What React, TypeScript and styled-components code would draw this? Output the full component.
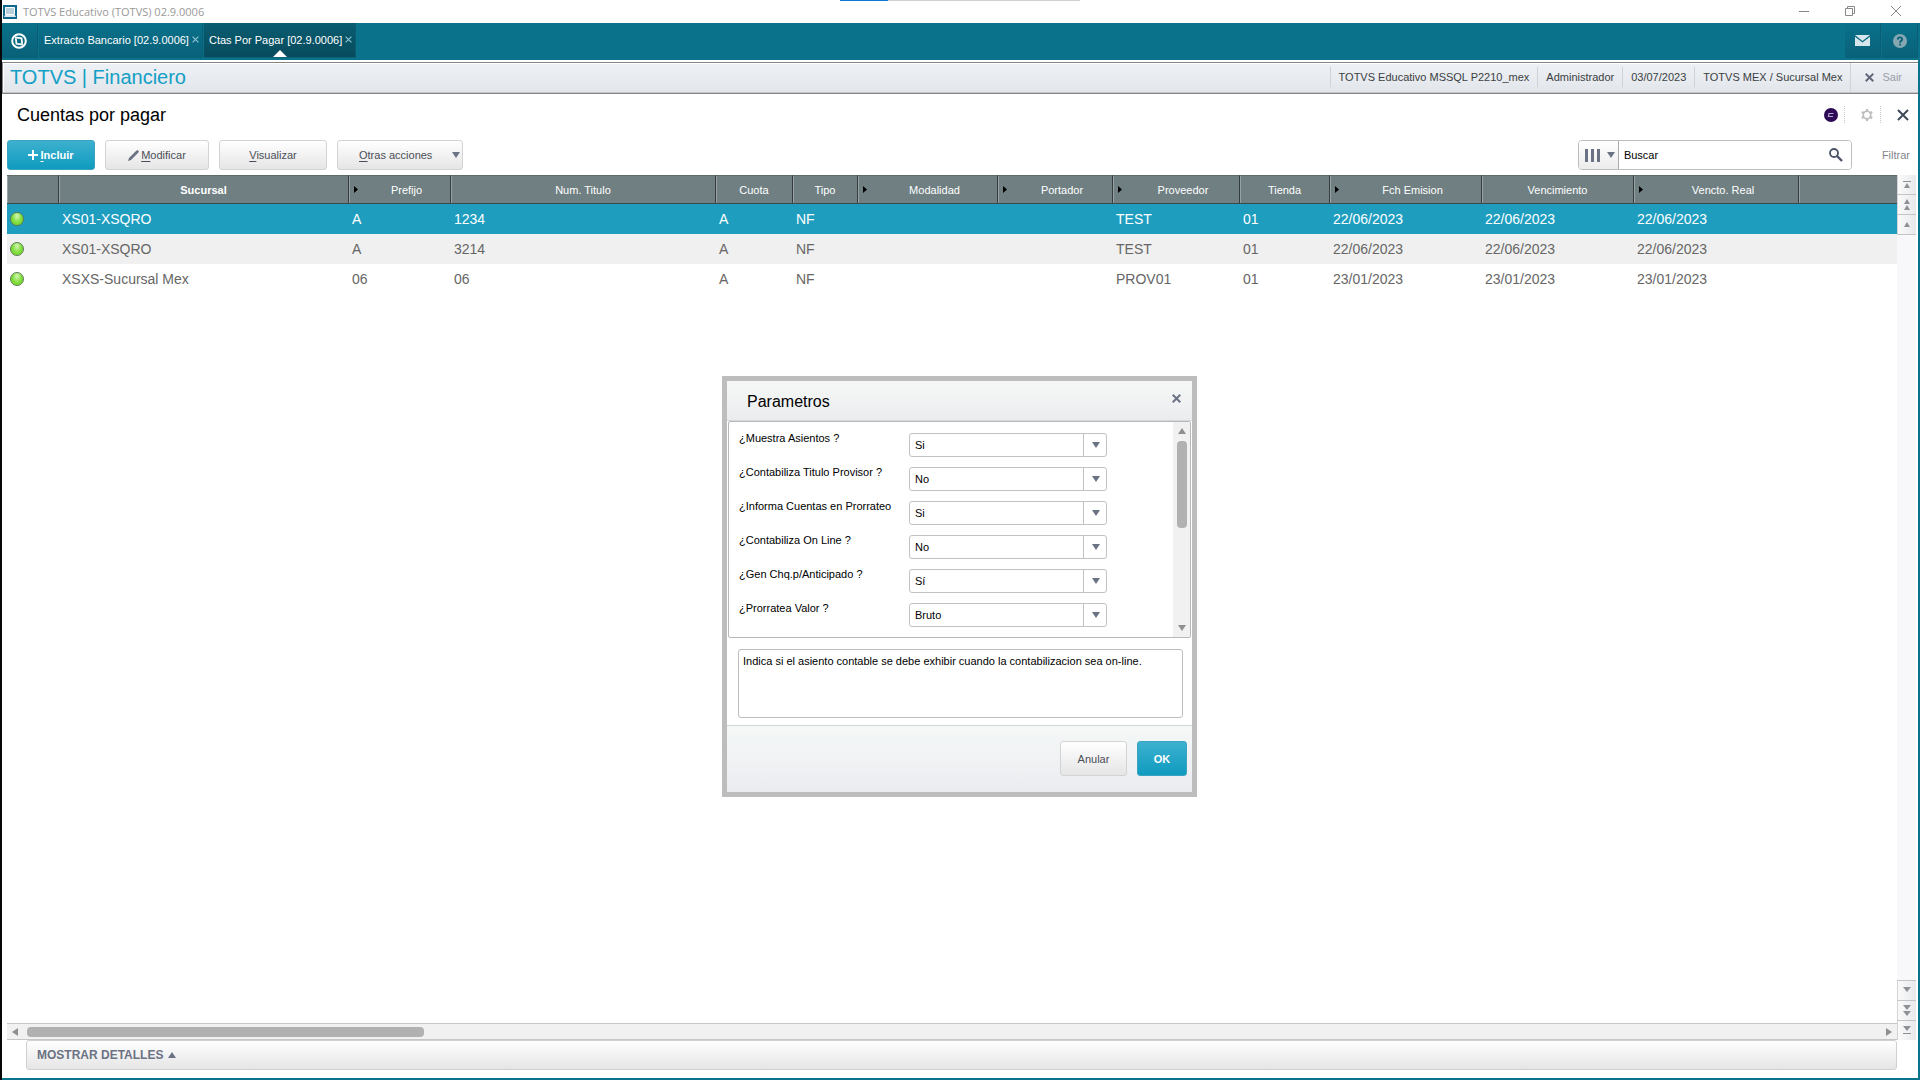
import React from "react";
import styled, { createGlobalStyle, css } from "styled-components";

const GlobalStyle = createGlobalStyle`
  *, *::before, *::after { box-sizing: border-box; }
  html, body, #root { height: 100%; }
  body {
    margin: 0;
    overflow: hidden;
    background: #fff;
    color: #000;
    font-family: "Liberation Sans", Arial, sans-serif;
    font-size: 11px;
    line-height: 14px;
  }
  button, input, select, textarea { font: inherit; margin: 0; }
  button { cursor: pointer; }
  svg { display: block; flex: none; }
`;

const teal = "#0b728c";
const slate = "#6b7283";

const Window = styled.div`
  height: 100vh;
  display: flex;
  flex-direction: column;
  border-left: 2px solid #050708;
`;

const TitleBar = styled.header`
  height: 23px;
  flex: none;
  display: flex;
  align-items: center;
  padding-left: 1px;
  background: #fff;
  color: #999;
  font-family: "Open Sans", "Noto Sans", sans-serif;
  position: relative;
`;

const WindowTitle = styled.span`
  flex: 1;
  padding-left: 6px;
`;

const LoadTrack = styled.div`
  position: absolute;
  top: 0;
  left: 838px;
  width: 240px;
  height: 1px;
  background: #d0d0d0;
`;

const LoadBar = styled.div`
  width: 48px;
  height: 1px;
  background: #0a78d6;
`;

const WindowButton = styled.button`
  width: 46px;
  height: 23px;
  padding: 0 2px 2px 0;
  border: 0;
  background: none;
  color: #888;
  display: grid;
  place-items: center;
`;

const Frame = styled.div`
  flex: 1;
  min-height: 0;
  display: flex;
  flex-direction: column;
  border-right: 2px solid ${teal};
  border-bottom: 2px solid ${teal};
  background: #fff;
`;

const TabBar = styled.nav`
  height: 37px;
  flex: none;
  display: flex;
  align-items: flex-start;
  gap: 1px;
  background: ${teal};
`;

const Tab = styled.div<{ $active?: boolean }>`
  height: 35px;
  display: flex;
  align-items: center;
  gap: 2px;
  padding: 0 2px 0 5px;
  border-right: 1px solid #0a5d73;
  border-bottom: 1px solid #0a6379;
  background: linear-gradient(${(p) => (p.$active ? "#095c71, #074b5d" : "#0a718a, #086179")});
  position: relative;
`;

const TabNotch = styled.svg`
  position: absolute;
  left: calc(50% - 7px);
  bottom: 0;
`;

const TabName = styled.button`
  height: 34px;
  padding: 0;
  border: 0;
  background: none;
  color: #fff;
  white-space: nowrap;
`;

const TabClose = styled.button`
  padding: 0 0 2px;
  width: 9px;
  height: 14px;
  border: 0;
  background: none;
  color: #8fc3d2;
  display: grid;
  place-items: center;
`;

const BarButton = styled.button`
  width: 36px;
  height: 35px;
  padding: 0 2px 0 0;
  border: 0;
  border-right: 1px solid #0a5d73;
  background: linear-gradient(#0a718a, #086179);
  color: #fff;
  display: grid;
  place-items: center;
`;

const ToolButton = styled(BarButton)`
  padding: 0;
`;

const Spacer = styled.div`
  flex: 1;
`;

const ProductBar = styled.div`
  height: 32px;
  flex: none;
  display: flex;
  align-items: center;
  margin-top: 2px;
  padding: 0 0 2px 7px;
  border: 1px solid #858585;
  border-right: 0;
  box-shadow: inset 0 -2px 0 -1px #c4c4c8, inset 1px 1px 0 #fff;
  background: linear-gradient(#eef1f5, #e2e5ea);
`;

const Product = styled.h1`
  flex: 1;
  margin: 0;
  color: #12a0c6;
  font-size: 20px;
  line-height: 24px;
  font-weight: 400;
`;

const Info = styled.span`
  height: 20px;
  display: flex;
  align-items: center;
  padding: 0 8px;
  border-left: 1px solid #d0d3d3;
  color: #3a3f42;
`;

const Exit = styled.button`
  height: 28px;
  display: flex;
  align-items: center;
  gap: 8px;
  padding: 0 16px 0 14px;
  border: 0;
  border-left: 1px solid #d0d3d3;
  background: none;
  color: #9a9da8;
`;

const Workspace = styled.main`
  flex: 1;
  min-height: 0;
  display: flex;
  flex-direction: column;
  padding: 0 2px 8px 5px;
  position: relative;
`;

const Heading = styled.div`
  height: 41px;
  flex: none;
  display: flex;
  align-items: center;
  padding: 0 7px 0 10px;
`;

const PageTitle = styled.h2`
  flex: 1;
  margin: 0;
  font-size: 18px;
  line-height: 22px;
  font-weight: 400;
`;

const HeadButton = styled.button`
  width: 36px;
  height: 17px;
  padding: 0 0 0 9px;
  border: 0;
  border-right: 1px dotted #c8c8c8;
  background: none;
  display: grid;
  place-items: center;
`;

const HeadClose = styled(HeadButton)`
  justify-items: end;
  width: 28px;
  border-right: 0;
  color: #3f4a59;
`;

const Toolbar = styled.div`
  height: 40px;
  flex: none;
  display: flex;
  align-items: center;
  gap: 10px;
  padding-right: 6px;
`;

const primary = css`
  border-color: #3aa3bf;
  background: linear-gradient(#3db0cf, #0f9bbf);
  color: #fff;
  font-weight: 700;
`;

const Button = styled.button<{ $primary?: boolean; $width: number; $tall?: boolean }>`
  width: ${(p) => p.$width}px;
  height: ${(p) => (p.$tall ? 35 : 30)}px;
  display: flex;
  align-items: center;
  justify-content: center;
  gap: 2px;
  padding: 0;
  border: 1px solid #d2d3d3;
  border-radius: 3px;
  background: linear-gradient(#fff, #e5e5e5);
  color: #4b4f58;
  ${(p) => p.$primary && primary}
`;

const MenuButton = styled(Button)`
  justify-content: space-between;
  padding: 0 2px 0 21px;
`;

const Key = styled.span`
  text-decoration: underline;
  text-underline-offset: 2px;
`;

const Search = styled.form`
  width: 274px;
  height: 30px;
  margin: 0 20px 0 auto;
  display: flex;
  border: 1px solid #bdbdbd;
  border-radius: 4px;
  overflow: hidden;
`;

const ColumnPicker = styled.button`
  width: 40px;
  padding: 0 3px 0 6px;
  border: 0;
  border-right: 1px solid #aaa;
  background: linear-gradient(#fff, #ececec);
  display: flex;
  align-items: center;
  justify-content: space-between;
`;

const SearchInput = styled.input`
  flex: 1;
  min-width: 0;
  padding: 0 5px;
  border: 0;
  outline: 0;
  background: #fff;
  color: #000;
  &::placeholder { color: #000; opacity: 1; }
`;

const SearchButton = styled.button`
  width: 30px;
  padding: 0;
  border: 0;
  background: #fff;
  display: grid;
  place-items: center;
`;

const FilterButton = styled.button`
  padding: 0;
  border: 0;
  background: none;
  color: #85858c;
`;

const GridArea = styled.div`
  flex: 1;
  min-height: 0;
  display: flex;
`;

const GridMain = styled.div`
  flex: 1;
  min-width: 0;
  display: flex;
  flex-direction: column;
`;

const TableBox = styled.div`
  flex: 1;
  overflow: hidden;
`;

const Table = styled.table`
  width: 100%;
  table-layout: fixed;
  border-collapse: separate;
  border-spacing: 0;
  font-size: 14px;
  line-height: 16px;
`;

const Th = styled.th<{ $strong?: boolean }>`
  height: 29px;
  padding: 0;
  border-top: 1px solid #626b6b;
  border-bottom: 1px solid #3f4848;
  border-right: 1px solid #353d40;
  box-shadow: inset 1px 0 0 #96a2a4;
  background: #6f7f82;
  color: #fff;
  font-size: 11px;
  line-height: 14px;
  font-weight: ${(p) => (p.$strong ? 700 : 400)};
  &:last-child { border-right: 0; }
`;

const ThContent = styled.div`
  display: flex;
  align-items: center;
  justify-content: center;
`;

const ThLabel = styled.span`
  flex: 1;
  text-align: center;
`;

const SortMark = styled.svg`
  width: 5px;
  margin: 0 4px 0 5px;
`;

const Tr = styled.tr<{ $selected?: boolean }>`
  background: ${(p) => (p.$selected ? "#1e9dbf" : "#fff")};
  color: ${(p) => (p.$selected ? "#fff" : "#666")};
  &:nth-child(2) { background: #f0f0f0; }
`;

const Td = styled.td`
  height: 30px;
  padding: 0 3px;
  white-space: nowrap;
`;

const Status = styled.span`
  width: 14px;
  height: 14px;
  display: block;
  border: 1px solid #5c7a55;
  border-radius: 50%;
  background: radial-gradient(ellipse at 50% 25%, #d2f8b4, #7fdc3a 55%, #6fdc28);
`;

const HScroll = styled.div`
  height: 17px;
  flex: none;
  display: flex;
  align-items: center;
  padding: 0 5px;
  border: solid #c6c6c6;
  border-width: 1px 0;
  background: #f1f1f1;
`;

const HTrack = styled.div`
  flex: 1;
  padding: 0 9px;
`;

const HThumb = styled.div`
  width: 397px;
  height: 10px;
  border-radius: 4px;
  background: #b1b1b1;
`;

const VNav = styled.div`
  width: 19px;
  display: flex;
  flex-direction: column;
  background: #f8f8fb;
`;

const VButton = styled.button`
  width: 19px;
  height: 20px;
  padding: 0;
  border: 0;
  border-left: 1px solid #d4d4d6;
  border-bottom: 1px solid #c4c4c8;
  background: linear-gradient(90deg, #fafafa, #e8e9ec);
  display: grid;
  place-items: center;
`;

const VButtonDown = styled(VButton)`
  border-top: 1px solid #c4c4c8;
  border-bottom: 0;
`;

const Details = styled.button`
  height: 30px;
  flex: none;
  margin: 0 19px;
  display: flex;
  align-items: center;
  gap: 5px;
  padding: 0 10px;
  border: 1px solid #d0d0d0;
  border-radius: 3px;
  background: linear-gradient(#fff, #e5e5e5);
  color: ${slate};
  font-size: 12px;
  font-weight: 700;
`;

const Overlay = styled.div`
  position: absolute;
  inset: 1px 1px 0 0;
  display: grid;
  place-items: center;
  pointer-events: none;
`;

const Dialog = styled.section`
  width: 475px;
  border: 5px solid #bdbdbd;
  background: #fff;
  pointer-events: auto;
`;

const DialogHeader = styled.div`
  height: 40px;
  display: flex;
  align-items: center;
  padding: 0 11px 0 20px;
  border-bottom: 1px solid #d8d8d8;
  background: linear-gradient(#f5f8f7, #ebecee);
`;

const DialogTitle = styled.h3`
  flex: 1;
  margin: 0;
  padding-top: 2px;
  font-size: 16px;
  line-height: 20px;
  font-weight: 400;
`;

const DialogClose = styled.button`
  padding: 0 0 5px;
  border: 0;
  background: none;
  color: ${slate};
`;

const FormBox = styled.div`
  height: 217px;
  margin: 0 1px;
  display: flex;
  border: 1px solid #b8b8b8;
  border-radius: 2px;
  overflow: hidden;
`;

const Fields = styled.div`
  flex: 1;
  display: flex;
  flex-direction: column;
  gap: 10px;
  padding: 11px 0 0 10px;
`;

const Field = styled.div`
  height: 24px;
  flex: none;
  display: flex;
`;

const Label = styled.label`
  width: 170px;
  line-height: 10px;
  white-space: nowrap;
`;

const SelectBox = styled.div`
  width: 198px;
  border: 1px solid #c0c2c4;
  border-radius: 3px;
  position: relative;
`;

const Select = styled.select`
  width: 100%;
  height: 22px;
  padding: 0 28px 0 5px;
  border: 0;
  appearance: none;
  background: none;
  color: #000;
  outline: 0;
`;

const SelectArrow = styled.span`
  position: absolute;
  top: 0;
  right: 0;
  width: 23px;
  height: 22px;
  padding-left: 2px;
  border-left: 1px solid #c0c2c4;
  display: grid;
  place-items: center;
  pointer-events: none;
`;

const VScroll = styled.div`
  width: 17px;
  display: flex;
  flex-direction: column;
  align-items: center;
  justify-content: space-between;
  padding: 6px 0;
  background: #f1f1f1;
`;

const VTrack = styled.div`
  flex: 1;
  padding: 7px 0;
`;

const VThumb = styled.div`
  width: 10px;
  height: 87px;
  border-radius: 4px;
  background: #b1b1b1;
`;

const HelpArea = styled.div`
  padding: 11px 9px 7px 11px;
`;

const HelpText = styled.textarea`
  width: 100%;
  height: 69px;
  display: block;
  padding: 4px;
  border: 1px solid #bdbdbd;
  border-radius: 3px;
  outline: 0;
  resize: none;
  color: #000;
`;

const DialogFooter = styled.div`
  height: 67px;
  display: flex;
  align-items: flex-start;
  justify-content: flex-end;
  gap: 10px;
  padding: 15px 5px 0 0;
  border-top: 1px solid #d0d6d4;
  background: linear-gradient(#f5f8f7, #ebecf0);
`;

type Direction = "up" | "down" | "left" | "right";
const shapes: Record<Direction, [number, number, string]> = {
  down: [8, 6, "M0 0H8L4 6Z"],
  up: [8, 6, "M0 6H8L4 0Z"],
  left: [6, 8, "M6 0V8L0 4Z"],
  right: [6, 8, "M0 0V8L6 4Z"],
};

const Triangle = ({ dir, color = slate }: { dir: Direction; color?: string }) => {
  const [w, h, d] = shapes[dir];
  return (
    <svg width={w} height={h} viewBox={`0 0 ${w} ${h}`} aria-hidden="true">
      <path d={d} fill={color} />
    </svg>
  );
};

const Cross = ({ size, weight }: { size: number; weight: number }) => (
  <svg width={size} height={size} viewBox="0 0 12 12" aria-hidden="true">
    <path d="M1 1L11 11M11 1L1 11" stroke="currentColor" strokeWidth={weight} />
  </svg>
);

const NavIcon = ({ kind }: { kind: string }) => (
  <svg width="10" height="13" viewBox="0 0 10 13" fill="#8f9196" aria-hidden="true">
    {kind === "first" && <path d="M1 3H9V4H1ZM2 10H8L5 5Z" />}
    {kind === "pageUp" && <path d="M2 6H8L5 1ZM2 12H8L5 7Z" />}
    {kind === "up" && <path d="M2 9H8L5 4Z" />}
    {kind === "down" && <path d="M1 3H9L5 8Z" />}
    {kind === "pageDown" && <path d="M1 1H9L5 6ZM1 7H9L5 12Z" />}
    {kind === "last" && <path d="M1 2H9L5 7ZM1 9H9V10H1Z" />}
  </svg>
);

const columns = [
  { name: "", width: 52 },
  { name: "Sucursal", width: 290, strong: true },
  { name: "Prefijo", width: 102, mark: true },
  { name: "Num. Titulo", width: 265 },
  { name: "Cuota", width: 77 },
  { name: "Tipo", width: 65 },
  { name: "Modalidad", width: 140, mark: true },
  { name: "Portador", width: 115, mark: true },
  { name: "Proveedor", width: 127, mark: true },
  { name: "Tienda", width: 90 },
  { name: "Fch Emision", width: 152, mark: true },
  { name: "Vencimiento", width: 152 },
  { name: "Vencto. Real", width: 165, mark: true },
  { name: "" },
];

const rows = [
  ["XS01-XSQRO", "A", "1234", "A", "NF", "", "", "TEST", "01", "22/06/2023", "22/06/2023", "22/06/2023", ""],
  ["XS01-XSQRO", "A", "3214", "A", "NF", "", "", "TEST", "01", "22/06/2023", "22/06/2023", "22/06/2023", ""],
  ["XSXS-Sucursal Mex", "06", "06", "A", "NF", "", "", "PROV01", "01", "23/01/2023", "23/01/2023", "23/01/2023", ""],
];

const parameters = [
  ["¿Muestra Asientos ?", "Si", "No"],
  ["¿Contabiliza Titulo Provisor ?", "No", "Si"],
  ["¿Informa Cuentas en Prorrateo", "Si", "No"],
  ["¿Contabiliza On Line ?", "No", "Si"],
  ["¿Gen Chq.p/Anticipado ?", "Sí", "No"],
  ["¿Prorratea Valor ?", "Bruto", "Neto"],
];

const AppIcon = () => (
  <svg width="14" height="14" viewBox="0 0 14 14" aria-hidden="true">
    <path d="M0 0H14V14H0Z" fill="#0d6a8c" />
    <path d="M2.5 2.5H11.5V9.5H2.5Z" fill="#b9cfda" stroke="#fff" />
    <path d="M2 10H12L13 12H1Z" fill="#dfeaf0" />
  </svg>
);

const TotvsLogo = () => (
  <svg width="16" height="16" viewBox="0 0 16 16" fill="none" aria-hidden="true">
    <circle cx="8" cy="8" r="6.8" stroke="#fff" strokeWidth="2" />
    <path d="M4 4.5L10.5 5.2L11.2 10.5" stroke="#fff" strokeWidth="1.8" />
    <path d="M4.8 5.5L5.5 10.8L12 11.5" stroke="#fff" strokeWidth="1.8" />
  </svg>
);

export default function App() {
  return (
    <>
      <GlobalStyle />
      <Window>
        <TitleBar>
          <AppIcon />
          <WindowTitle>TOTVS Educativo (TOTVS) 02.9.0006</WindowTitle>
          <LoadTrack>
            <LoadBar />
          </LoadTrack>
          <WindowButton aria-label="Minimizar">
            <svg width="10" height="10" viewBox="0 0 10 10"><path d="M0 5.5H10" stroke="currentColor" /></svg>
          </WindowButton>
          <WindowButton aria-label="Restaurar">
            <svg width="10" height="10" viewBox="0 0 10 10" fill="none" stroke="currentColor">
              <path d="M.5 2.5H7.5V9.5H.5ZM2.5 2.5V.5H9.5V7.5H7.5" />
            </svg>
          </WindowButton>
          <WindowButton aria-label="Cerrar"><Cross size={12} weight={1} /></WindowButton>
        </TitleBar>
        <Frame>
          <TabBar>
            <BarButton aria-label="Inicio"><TotvsLogo /></BarButton>
            <Tab>
              <TabName>Extracto Bancario [02.9.0006]</TabName>
              <TabClose aria-label="Cerrar Extracto Bancario"><Cross size={7} weight={2} /></TabClose>
            </Tab>
            <Tab $active>
              <TabName>Ctas Por Pagar [02.9.0006]</TabName>
              <TabClose aria-label="Cerrar Ctas Por Pagar"><Cross size={7} weight={2} /></TabClose>
              <TabNotch width="14" height="7" viewBox="0 0 14 7"><path d="M7 0L14 7H0Z" fill="#fff" /></TabNotch>
            </Tab>
            <Spacer />
            <ToolButton aria-label="Mensajes">
              <svg width="15" height="11" viewBox="0 0 15 11" fill="#d7e6ea">
                <path d="M0 0H15L7.5 6Z" />
                <path d="M0 1.8L7.5 7.6L15 1.8V11H0Z" />
              </svg>
            </ToolButton>
            <ToolButton aria-label="Ayuda">
              <svg width="14" height="14" viewBox="0 0 14 14">
                <circle cx="7" cy="7" r="7" fill="#84a7b2" />
                <path d="M4.8 5.5C4.8 2.6 9.3 2.7 9.2 5.3C9.2 6.9 7 6.8 7 8.8M7 9.8V11.6" fill="none" stroke="#0a5f76" strokeWidth="1.8" />
              </svg>
            </ToolButton>
          </TabBar>
          <ProductBar>
            <Product>TOTVS | Financiero</Product>
            <Info>TOTVS Educativo MSSQL P2210_mex</Info>
            <Info>Administrador</Info>
            <Info>03/07/2023</Info>
            <Info>TOTVS MEX / Sucursal Mex</Info>
            <Exit>
              <svg width="9" height="9" viewBox="0 0 12 12"><path d="M1 1L11 11M11 1L1 11" stroke="#5f6678" strokeWidth="2.4" /></svg>
              Sair
            </Exit>
          </ProductBar>
          <Workspace>
            <Heading>
              <PageTitle>Cuentas por pagar</PageTitle>
              <HeadButton aria-label="Asistente">
                <svg width="14" height="14" viewBox="0 0 14 14">
                  <circle cx="7" cy="7" r="7" fill="#2d0c55" />
                  <path d="M9.5 5.5H5L4.5 8.5H9" fill="none" stroke="#b8a5d8" strokeWidth="1.2" />
                </svg>
              </HeadButton>
              <HeadButton aria-label="Configurar">
                <svg width="12" height="12" viewBox="0 0 12 12" fill="none" stroke="#bdbdbd">
                  <circle cx="6" cy="6" r="3.7" strokeWidth="1.6" />
                  <path d="M6 0V2.5M6 9.5V12M.8 3L3 4.3M11.2 3L9 4.3M.8 9L3 7.7M11.2 9L9 7.7" strokeWidth="2.2" />
                </svg>
              </HeadButton>
              <HeadClose aria-label="Cerrar"><Cross size={12} weight={2} /></HeadClose>
            </Heading>
            <Toolbar>
              <Button $primary $width={88}>
                <svg width="10" height="10" viewBox="0 0 10 10"><path d="M5 0V10M0 5H10" stroke="#fff" strokeWidth="2" /></svg>
                <span><Key>I</Key>ncluir</span>
              </Button>
              <Button $width={104}>
                <svg width="11" height="11" viewBox="0 0 11 11" fill={slate}><path d="M0 11L1 8L8 1L9.5 0L11 1.5L10 3L3 10Z" /></svg>
                <span><Key>M</Key>odificar</span>
              </Button>
              <Button $width={108}><span><Key>V</Key>isualizar</span></Button>
              <MenuButton $width={126}>
                <span><Key>O</Key>tras acciones</span>
                <Triangle dir="down" />
              </MenuButton>
              <Search onSubmit={(e: React.FormEvent) => e.preventDefault()}>
                <ColumnPicker type="button" aria-label="Columnas">
                  <svg width="15" height="13" viewBox="0 0 15 13"><path d="M1.5 0V13M7.5 0V13M13.5 0V13" stroke={slate} strokeWidth="3" /></svg>
                  <Triangle dir="down" />
                </ColumnPicker>
                <SearchInput aria-label="Buscar" placeholder="Buscar" />
                <SearchButton aria-label="Ejecutar búsqueda">
                  <svg width="14" height="14" viewBox="0 0 14 14" fill="none" stroke="#4b5566">
                    <circle cx="5" cy="5" r="4" strokeWidth="1.8" />
                    <path d="M8 8L13 13" strokeWidth="2.4" />
                  </svg>
                </SearchButton>
              </Search>
              <FilterButton>Filtrar</FilterButton>
            </Toolbar>
            <GridArea>
              <GridMain>
                <TableBox>
                  <Table>
                    <colgroup>
                      {columns.map((c, i) => <col key={i} width={c.width} />)}
                    </colgroup>
                    <thead>
                      <tr>
                        {columns.map((c, i) => (
                          <Th key={i} $strong={c.strong}>
                            <ThContent>
                              {c.mark && <SortMark height="7" viewBox="0 0 5 7"><path d="M0 0L4 3.5L0 7Z" fill="#000" /></SortMark>}
                              <ThLabel>{c.name}</ThLabel>
                            </ThContent>
                          </Th>
                        ))}
                      </tr>
                    </thead>
                    <tbody>
                      {rows.map((r, i) => (
                        <Tr key={i} $selected={i === 0}>
                          <Td><Status role="img" aria-label="Pendiente" /></Td>
                          {r.map((cell, j) => <Td key={j}>{cell}</Td>)}
                        </Tr>
                      ))}
                    </tbody>
                  </Table>
                </TableBox>
                <HScroll>
                  <Triangle dir="left" color="#909090" />
                  <HTrack><HThumb /></HTrack>
                  <Triangle dir="right" color="#909090" />
                </HScroll>
              </GridMain>
              <VNav>
                <VButton aria-label="Primero"><NavIcon kind="first" /></VButton>
                <VButton aria-label="Página anterior"><NavIcon kind="pageUp" /></VButton>
                <VButton aria-label="Anterior"><NavIcon kind="up" /></VButton>
                <Spacer />
                <VButtonDown aria-label="Siguiente"><NavIcon kind="down" /></VButtonDown>
                <VButtonDown aria-label="Página siguiente"><NavIcon kind="pageDown" /></VButtonDown>
                <VButtonDown aria-label="Último"><NavIcon kind="last" /></VButtonDown>
              </VNav>
            </GridArea>
            <Details>MOSTRAR DETALLES <Triangle dir="up" /></Details>
            <Overlay>
              <Dialog role="dialog" aria-labelledby="dialog-title">
                <DialogHeader>
                  <DialogTitle id="dialog-title">Parametros</DialogTitle>
                  <DialogClose aria-label="Cerrar"><Cross size={9} weight={2.6} /></DialogClose>
                </DialogHeader>
                <FormBox>
                  <Fields>
                    {parameters.map(([label, value, other], i) => (
                      <Field key={label}>
                        <Label htmlFor={`param-${i}`}>{label}</Label>
                        <SelectBox>
                          <Select id={`param-${i}`} defaultValue={value}>
                            <option>{value}</option>
                            <option>{other}</option>
                          </Select>
                          <SelectArrow><Triangle dir="down" /></SelectArrow>
                        </SelectBox>
                      </Field>
                    ))}
                  </Fields>
                  <VScroll>
                    <Triangle dir="up" color="#909090" />
                    <VTrack><VThumb /></VTrack>
                    <Triangle dir="down" color="#909090" />
                  </VScroll>
                </FormBox>
                <HelpArea>
                  <HelpText
                    aria-label="Ayuda"
                    readOnly
                    defaultValue="Indica si el asiento contable se debe exhibir cuando la contabilizacion sea on-line."
                  />
                </HelpArea>
                <DialogFooter>
                  <Button $width={67} $tall>Anular</Button>
                  <Button $width={50} $tall $primary>OK</Button>
                </DialogFooter>
              </Dialog>
            </Overlay>
          </Workspace>
        </Frame>
      </Window>
    </>
  );
}
